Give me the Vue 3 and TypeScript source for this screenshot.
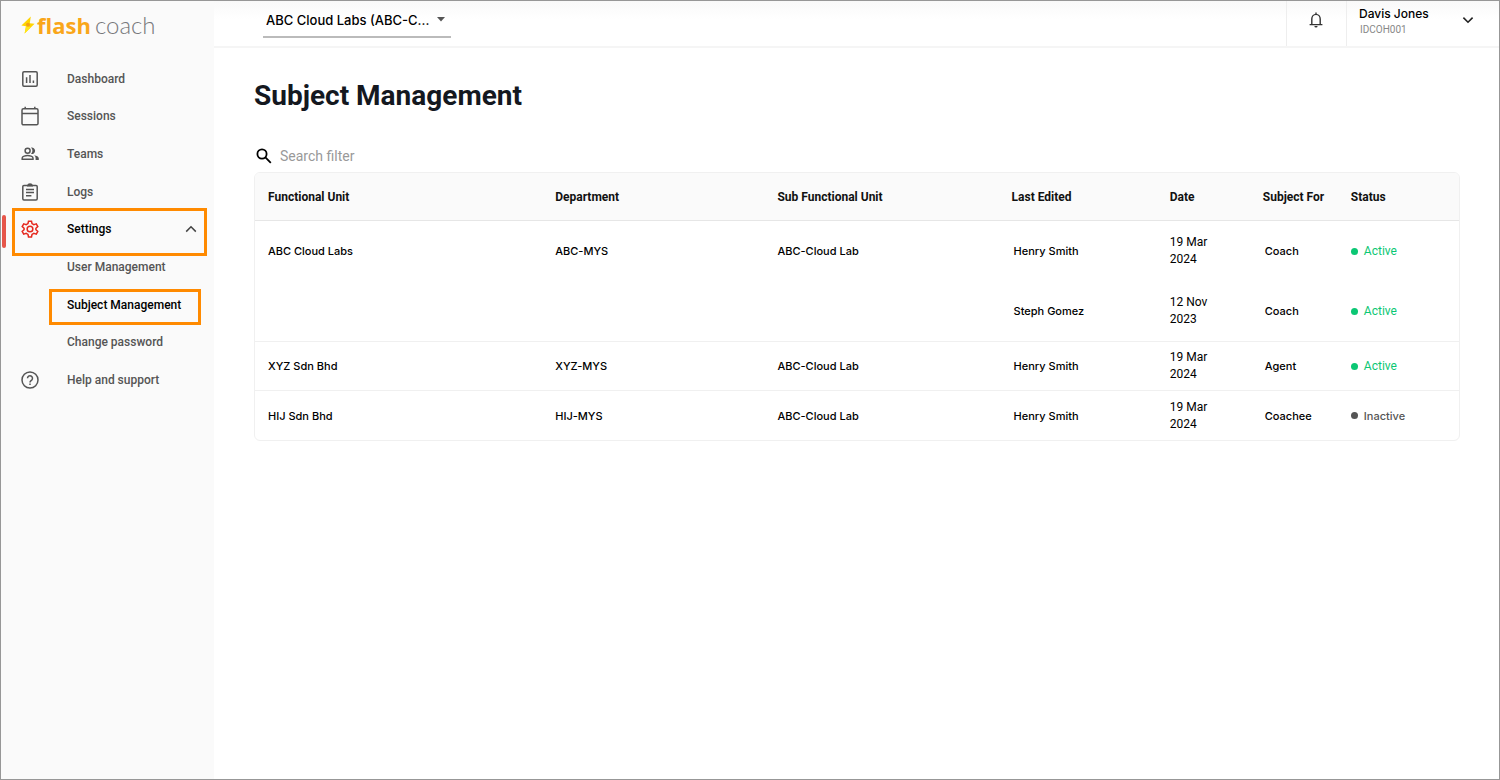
<script setup lang="ts">
import { ref } from 'vue'

interface NavItem {
  label: string
  icon?: 'dashboard' | 'sessions' | 'teams' | 'logs' | 'settings' | 'help'
  kind?: 'expanded' | 'current'
}

interface SubjectRow {
  unit: string
  department: string
  subUnit: string
  editor: string
  day: string
  year: string
  subjectFor: string
  active: boolean
  size: 'tall' | 'tall-end' | 'short'
}

const navItems: NavItem[] = [
  { label: 'Dashboard', icon: 'dashboard' },
  { label: 'Sessions', icon: 'sessions' },
  { label: 'Teams', icon: 'teams' },
  { label: 'Logs', icon: 'logs' },
  { label: 'Settings', icon: 'settings', kind: 'expanded' },
  { label: 'User Management' },
  { label: 'Subject Management', kind: 'current' },
  { label: 'Change password' },
  { label: 'Help and support', icon: 'help' },
]

const rows: SubjectRow[] = [
  { unit: 'ABC Cloud Labs', department: 'ABC-MYS', subUnit: 'ABC-Cloud Lab', editor: 'Henry Smith', day: '19 Mar', year: '2024', subjectFor: 'Coach', active: true, size: 'tall' },
  { unit: '', department: '', subUnit: '', editor: 'Steph Gomez', day: '12 Nov', year: '2023', subjectFor: 'Coach', active: true, size: 'tall-end' },
  { unit: 'XYZ Sdn Bhd', department: 'XYZ-MYS', subUnit: 'ABC-Cloud Lab', editor: 'Henry Smith', day: '19 Mar', year: '2024', subjectFor: 'Agent', active: true, size: 'short' },
  { unit: 'HIJ Sdn Bhd', department: 'HIJ-MYS', subUnit: 'ABC-Cloud Lab', editor: 'Henry Smith', day: '19 Mar', year: '2024', subjectFor: 'Coachee', active: false, size: 'short' },
]

const company = ref('abc')
const search = ref('')
</script>

<template>
  <div class="page">
    <aside class="sidebar">
      <a class="logo" href="#">
        <svg class="bolt" viewBox="0 0 14 18" aria-hidden="true">
          <path d="M9.8 0.400 0.400 9.600 5 10.200 3.600 17.600 13.600 7.800 8.800 7.200Z" fill="#ffd400" />
          <path d="M5 10.200 3.600 17.600 9.400 11.800 6.200 8Z" fill="#ffe61a" />
          <circle cx="7" cy="8.800" r="2" fill="#f5a014" />
        </svg>
        <span class="logo-flash">flash</span>
        <span class="logo-coach">coach</span>
      </a>
      <nav>
        <ul class="nav">
          <li v-for="item in navItems" :key="item.label">
            <a href="#" class="nav-link" :class="item.kind">
              <span class="nav-icon">
                <svg v-if="item.icon === 'dashboard'" viewBox="0 0 18 18">
                  <rect x="1.8" y="1.8" width="14.4" height="14.4" rx="1.2" />
                  <path d="M5.6 7.2V13M9 5V13M12.4 10.4V13" />
                </svg>
                <svg v-else-if="item.icon === 'sessions'" viewBox="0 0 18 20">
                  <rect x="1" y="2.8" width="16" height="16" rx="1.4" />
                  <path d="M1 7.4H17M4.2 0.8V3M13.8 0.8V3" />
                </svg>
                <svg v-else-if="item.icon === 'teams'" viewBox="0 0 18 14">
                  <circle cx="6.6" cy="3.8" r="2.5" />
                  <path d="M1.2 12.2V11C1.2 9.4 4.6 8.5 6.6 8.5S12 9.4 12 11V12.2Z" />
                  <path class="solid" d="M10 .6a3.3 3.3 0 1 1 0 6.4 4.8 4.8 0 0 0 0-6.4ZM13.2 8.2c2.4.4 4.6 1.4 4.6 3V13h-3.2v-1.8c0-1.2-.5-2.2-1.4-3Z" />
                </svg>
                <svg v-else-if="item.icon === 'logs'" viewBox="0 0 18 18">
                  <rect x="1.8" y="2.4" width="14.4" height="14.6" rx="1.2" />
                  <path d="M5 6.4H13M5 9.6H13M5 12.8H10.4" />
                  <path class="solid" d="M6 2.6a3.1 3.1 0 0 1 6 0v1H6Z" />
                </svg>
                <svg v-else-if="item.icon === 'settings'" viewBox="0 0 24 24">
                  <path d="M10 1.5h4l.7 3.3 2.4 1.4 3.3-1 2 3.5-2.5 2.3v2l2.5 2.3-2 3.5-3.3-1-2.4 1.4-.7 3.3h-4l-.7-3.3-2.4-1.4-3.3 1-2-3.5L4.1 13v-2L1.600 8.700l2-3.500 3.300 1 2.400-1.400Z" />
                  <circle cx="12" cy="12" r="3.800" />
                </svg>
                <svg v-else-if="item.icon === 'help'" viewBox="0 0 18 18">
                  <circle cx="9" cy="9" r="8" />
                  <path d="M6.500 7.300a2.500 2.500 0 1 1 4.200 1.800C9.700 9.900 9 10.300 9 11.400M9 12.600V14" />
                </svg>
              </span>
              <span class="nav-label">{{ item.label }}</span>
              <svg v-if="item.kind === 'expanded'" class="nav-caret" viewBox="0 0 12 8" aria-hidden="true">
                <path d="M1.200 6.600 6 1.800 10.800 6.600" />
              </svg>
            </a>
          </li>
        </ul>
      </nav>
    </aside>

    <div class="content">
      <header class="topbar">
        <div class="company">
          <select v-model="company" aria-label="Company">
            <option value="abc">ABC Cloud Labs (ABC-C...</option>
          </select>
          <svg viewBox="0 0 8 5" aria-hidden="true"><path d="M0 0H8L4 4.400Z" fill="#555" /></svg>
        </div>
        <button class="bell" type="button" aria-label="Notifications">
          <svg viewBox="0 0 14 16" aria-hidden="true">
            <path d="M2.800 12.400V7a4.200 4.600 0 0 1 8.400 0V12.400M.6 12.600H13.400M7 2.200V.4" />
            <path d="M5.400 14H8.600A1.600 1.600 0 0 1 5.400 14Z" fill="#333" stroke="none" />
          </svg>
        </button>
        <button class="account" type="button">
          <span class="who">
            <span class="who-name">Davis Jones</span>
            <span class="who-id">IDCOH001</span>
          </span>
          <svg viewBox="0 0 12 8" aria-hidden="true"><path d="M1.400 1.600 6 6.200 10.600 1.600" /></svg>
        </button>
      </header>

      <main class="main">
        <h1>Subject Management</h1>
        <label class="search">
          <svg viewBox="0 0 16 16" aria-hidden="true">
            <circle cx="6" cy="6" r="4.600" />
            <path d="M9.400 9.400 14.800 14.800" />
          </svg>
          <input v-model="search" type="text" placeholder="Search filter" aria-label="Search filter" />
        </label>

        <div class="table-card">
          <table>
            <colgroup>
              <col class="c-unit" /><col class="c-dept" /><col class="c-sub" /><col class="c-editor" />
              <col class="c-date" /><col class="c-for" /><col class="c-status" />
            </colgroup>
            <thead>
              <tr>
                <th scope="col">Functional Unit</th>
                <th scope="col">Department</th>
                <th scope="col">Sub Functional Unit</th>
                <th scope="col">Last Edited</th>
                <th scope="col">Date</th>
                <th scope="col">Subject For</th>
                <th scope="col">Status</th>
              </tr>
            </thead>
            <tbody>
              <tr v-for="(row, i) in rows" :key="i" :class="row.size">
                <td>{{ row.unit }}</td>
                <td>{{ row.department }}</td>
                <td>{{ row.subUnit }}</td>
                <td class="inset">{{ row.editor }}</td>
                <td class="date">{{ row.day }}<br />{{ row.year }}</td>
                <td class="inset">{{ row.subjectFor }}</td>
                <td>
                  <span class="status" :class="{ active: row.active }">{{ row.active ? 'Active' : 'Inactive' }}</span>
                </td>
              </tr>
            </tbody>
          </table>
        </div>
      </main>
    </div>
  </div>
</template>

<style>
body {
  margin: 0;
}
</style>

<style scoped>
* {
  box-sizing: border-box;
}

.page {
  display: flex;
  min-height: 100vh;
  border: 1px solid #979797;
  background: #fff;
  color: #111;
  font-family: Roboto, "Liberation Sans", sans-serif;
}

.sidebar {
  flex: none;
  width: 213px;
  background: #fafafa;
}

.logo {
  display: flex;
  align-items: center;
  height: 59px;
  padding: 0 0 12px 20px;
  text-decoration: none;
  line-height: 28px;
}

.bolt {
  width: 14px;
  height: 18px;
  margin-right: 2px;
}

.logo-flash {
  color: #f9a61a;
  font: 700 22px/28px "Open Sans", sans-serif;
}

.logo-coach {
  margin-left: 4px;
  color: #77787b;
  font: 300 24px/28px Lato, sans-serif;
}

.nav {
  display: grid;
  grid-template-rows: repeat(9, 1fr);
  height: 339px;
  margin: 0;
  padding: 0;
  list-style: none;
}

.nav-link {
  position: relative;
  display: flex;
  align-items: center;
  height: 100%;
  padding: 0 17px 0 20px;
  color: #555;
  font-size: 12px;
  font-weight: 500;
  line-height: 16px;
  text-decoration: none;
}

.nav-icon {
  display: flex;
  flex: none;
  width: 18px;
  margin-right: 28px;
}

.nav-icon svg {
  width: 18px;
  fill: none;
  stroke: currentColor;
  stroke-width: 1.5;
}

.nav-icon .solid {
  fill: currentColor;
  stroke: none;
}

.nav-label {
  flex: 1;
}

.nav-caret {
  width: 12px;
  height: 8px;
  fill: none;
  stroke: #444;
  stroke-width: 1.5;
}

.expanded,
.current {
  color: #000;
}

.expanded .nav-icon {
  color: #e5281e;
}

.expanded .nav-icon svg {
  stroke-width: 2;
}

.expanded::before {
  content: "";
  position: absolute;
  top: 4px;
  left: 1px;
  width: 4px;
  height: 33px;
  border-radius: 2px;
  background: #e6564a;
}

.expanded::after,
.current::after {
  content: "";
  position: absolute;
  border: 3px solid #ff8a00;
}

.expanded::after {
  inset: -3px 7px -8px 11px;
}

.current::after {
  inset: 3px 13px -1px 48px;
}

.content {
  flex: 1;
  min-width: 0;
}

.topbar {
  display: flex;
  height: 47px;
  border-bottom: 2px solid #f5f5f5;
  background: linear-gradient(#f9f9f9, #fff 18px);
}

.company {
  display: flex;
  align-items: center;
  width: 188px;
  height: 37px;
  margin: 0 auto 0 49px;
  padding-top: 2px;
  border-bottom: 2px solid #bbb;
}

.company select {
  flex: 1;
  min-width: 0;
  height: 32px;
  padding: 0 0 0 3px;
  appearance: none;
  border: 0;
  background: none;
  color: #000;
  font: 500 13px/20px Inter, sans-serif;
}

.company svg {
  width: 8px;
  height: 5px;
  margin-right: 6px;
  pointer-events: none;
}

.bell,
.account {
  display: flex;
  align-items: center;
  border: 0;
  border-left: 1px solid #eee;
  background: none;
}

.bell {
  justify-content: center;
  width: 60px;
  padding: 0 1px 7px 0;
}

.bell svg {
  width: 14px;
  height: 16px;
  fill: none;
  stroke: #333;
  stroke-width: 1.4;
}

.account {
  justify-content: space-between;
  width: 153px;
  padding: 0 25px 3px 12px;
  text-align: left;
}

.account svg {
  width: 12px;
  height: 8px;
  margin-bottom: 4px;
  fill: none;
  stroke: #222;
  stroke-width: 1.6;
}

.who {
  display: flex;
  flex-direction: column;
}

.who-name {
  color: #000;
  font: 500 12px/16px Inter, sans-serif;
}

.who-id {
  padding-left: 1px;
  color: #888;
  font: 400 10px/16px Roboto, sans-serif;
}

.main {
  padding: 28px 39px 40px 40px;
}

h1 {
  margin: 0 0 28px;
  color: #14181f;
  font-size: 28px;
  font-weight: 700;
  line-height: 40px;
}

.search {
  display: flex;
  align-items: center;
  height: 24px;
  margin-bottom: 4px;
  padding: 0 2px;
}

.search svg {
  width: 16px;
  height: 16px;
  margin-right: 8px;
  fill: none;
  stroke: #000;
  stroke-width: 1.8;
}

.search input {
  flex: 1;
  padding: 0;
  border: 0;
  outline: 0;
  background: none;
  color: #222;
  font: 400 14px/20px Roboto, sans-serif;
}

.search input::placeholder {
  color: #999;
  opacity: 1;
}

.table-card {
  overflow: hidden;
  border: 1px solid #f0f0f0;
  border-radius: 6px;
}

table {
  width: 100%;
  border-collapse: separate;
  border-spacing: 0;
  table-layout: fixed;
}

.c-unit { width: 287px; }
.c-dept { width: 222px; }
.c-sub { width: 234px; }
.c-editor { width: 158px; }
.c-date { width: 93px; }
.c-for { width: 88px; }
.c-status { width: 121px; }

th {
  height: 48px;
  padding: 0 0 0 13px;
  border-bottom: 1px solid #e6e6e6;
  background: #fafafa;
  color: #111;
  font-size: 12px;
  font-weight: 700;
  line-height: 16px;
  text-align: left;
  white-space: nowrap;
}

td {
  height: 49px;
  padding: 0 0 0 13px;
  border-bottom: 1px solid #f0f0f0;
  color: #000;
  font: 500 11px/16px Inter, sans-serif;
}

td.inset {
  padding-left: 15px;
}

td.date {
  font: 400 12px/17px Roboto, sans-serif;
}

.tall td {
  height: 60px;
  border-bottom: 0;
}

.tall-end td {
  height: 61px;
}

tbody tr:last-child td {
  border-bottom: 0;
}

.status {
  display: flex;
  align-items: center;
  gap: 6px;
  color: #555;
}

.status::before {
  content: "";
  width: 7px;
  height: 7px;
  border-radius: 50%;
  background: currentColor;
}

.status.active {
  color: #0bc774;
  font: 400 12px/16px Roboto, sans-serif;
}
</style>
